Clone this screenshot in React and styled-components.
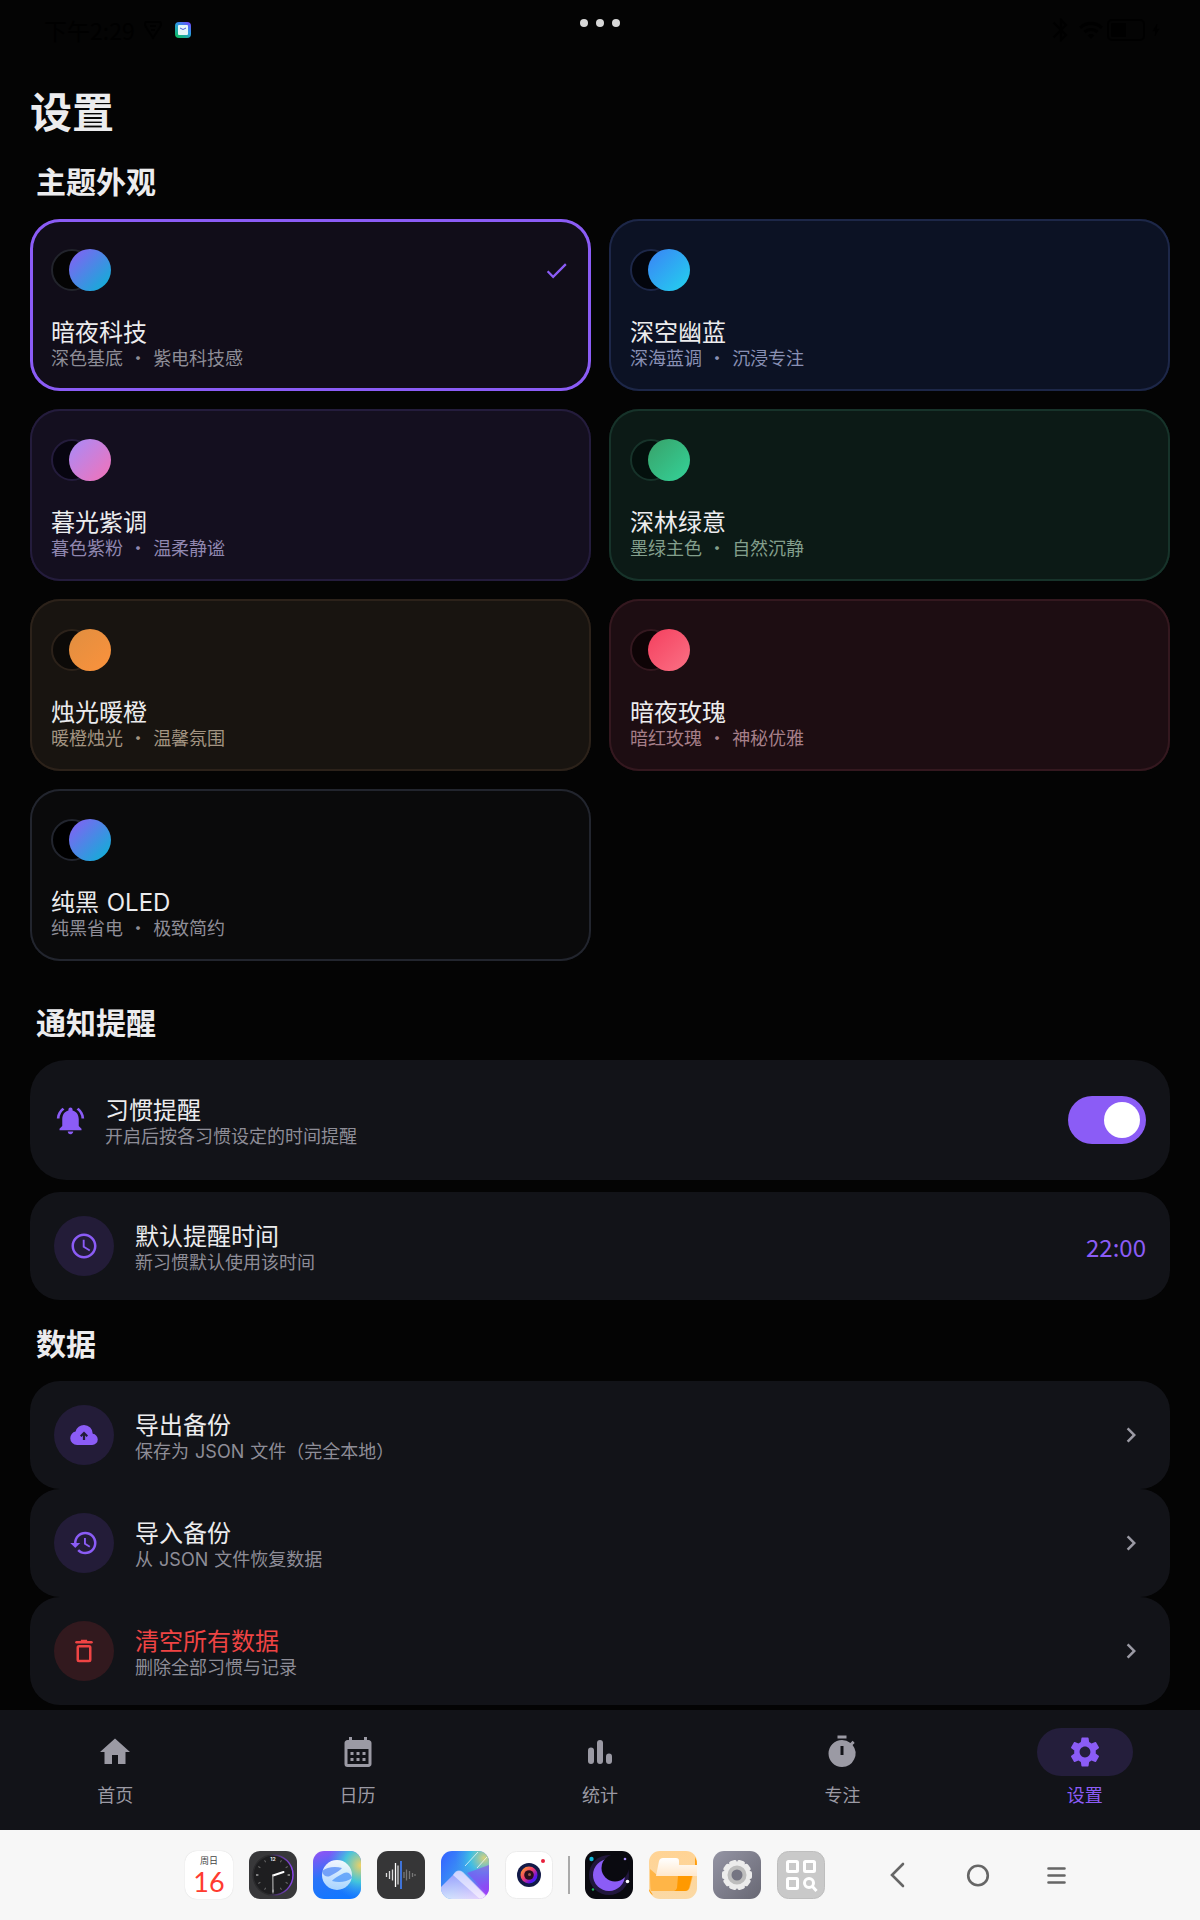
import { useState } from "react";
import styled, { createGlobalStyle } from "styled-components";
import {
  MdBluetooth,
  MdBolt,
  MdCalendarMonth,
  MdCheck,
  MdChevronRight,
  MdHistory,
  MdHome,
  MdNotificationsActive,
  MdSchedule,
  MdSettings,
  MdTimer,
  MdWifi,
} from "react-icons/md";

const themes = [
  { id: "dark", name: "暗夜科技", hint: ["深色基底", "紫电科技感"], bg: "#110d19", line: "#22242c", base: "#040404", from: "#8b5cf6", to: "#06b6d4", text: "#8e8d97" },
  { id: "blue", name: "深空幽蓝", hint: ["深海蓝调", "沉浸专注"], bg: "#0c1224", line: "#1d2748", base: "#03050d", from: "#3b82f6", to: "#22d3ee", text: "#8990b4" },
  { id: "dusk", name: "暮光紫调", hint: ["暮色紫粉", "温柔静谧"], bg: "#140f1f", line: "#241c3c", base: "#070510", from: "#a78bfa", to: "#f472b6", text: "#9087b0" },
  { id: "forest", name: "深林绿意", hint: ["墨绿主色", "自然沉静"], bg: "#0c1a16", line: "#17332a", base: "#04100d", from: "#38a169", to: "#34d399", text: "#839f8c" },
  { id: "candle", name: "烛光暖橙", hint: ["暖橙烛光", "温馨氛围"], bg: "#181410", line: "#2c221a", base: "#0c0a08", from: "#e08e40", to: "#fb923c", text: "#a39482" },
  { id: "rose", name: "暗夜玫瑰", hint: ["暗红玫瑰", "神秘优雅"], bg: "#1d0d12", line: "#34181f", base: "#0e0406", from: "#f43f5e", to: "#fb7185", text: "#a67f89" },
  { id: "oled", name: <>纯黑 <Latin>OLED</Latin></>, hint: ["纯黑省电", "极致简约"], bg: "#0a0a0b", line: "#22252e", base: "#000000", from: "#8b5cf6", to: "#06b6d4", text: "#8e8d97" },
];

function Latin({ children }) {
  return <LatinText>{children}</LatinText>;
}

const CloudUp = () => (
  <svg viewBox="0 0 24 24" width="30" height="30" aria-hidden="true">
    <path
      fill="#8b5cf6"
      d="M6.5 20q-2.28 0-3.89-1.57Q1 16.85 1 14.58q0-1.95 1.17-3.48 1.18-1.53 3.08-1.95.63-2.3 2.5-3.72Q9.63 4 12 4q2.93 0 4.96 2.04Q19 8.07 19 11q1.73.2 2.86 1.5 1.14 1.28 1.14 3 0 1.88-1.31 3.19T18.5 20z"
    />
    <path fill="#231c38" d="M12 9.2l3.2 3.2-1.1 1.1-1.2-1.2V16h-1.8v-3.7l-1.2 1.2-1.1-1.1z" />
  </svg>
);

const Trash = () => (
  <svg viewBox="0 0 24 24" width="30" height="30" fill="none" stroke="currentColor" strokeWidth="2" aria-hidden="true">
    <rect x="7" y="8.2" width="10" height="11.8" rx="1" />
    <path d="M6 5h12" strokeLinecap="round" />
    <path d="M9.5 4h5" />
  </svg>
);

const Bars = () => (
  <svg viewBox="0 0 24 24" width="36" height="36" fill="currentColor" aria-hidden="true">
    <rect x="4" y="9" width="4" height="11" rx="2" />
    <rect x="10" y="4" width="4" height="16" rx="2" />
    <rect x="16" y="13" width="4" height="7" rx="2" />
  </svg>
);

const tabs = [
  { name: "首页", icon: <MdHome size={36} /> },
  { name: "日历", icon: <MdCalendarMonth size={36} /> },
  { name: "统计", icon: <Bars /> },
  { name: "专注", icon: <MdTimer size={36} /> },
  { name: "设置", icon: <MdSettings size={36} /> },
];

const ClockApp = () => (
  <svg viewBox="0 0 48 48" width="48" height="48">
    <defs>
      <linearGradient id="ring" x1="0" x2="1">
        <stop offset="0.4" stopColor="#2b2b2d" />
        <stop offset="1" stopColor="#8b45f0" />
      </linearGradient>
    </defs>
    <rect width="48" height="48" rx="11" fill="#38383a" />
    <circle cx="24" cy="24" r="20" fill="#1e1e20" stroke="url(#ring)" strokeWidth="1.4" />
    {[30, 60, 90, 120, 150, 180, 210, 240, 270, 300, 330].map((a) => (
      <rect key={a} x="23.5" y="7" width="1" height="2.4" fill={a % 90 ? "#666" : "#ddd"} transform={`rotate(${a} 24 24)`} />
    ))}
    <text x="24" y="10" fontSize="5" fontWeight="700" textAnchor="middle" fill="#eee" fontFamily="Inter, sans-serif">12</text>
    <path d="M24 24.5L34.5 21" stroke="#fff" strokeWidth="2" strokeLinecap="round" />
    <path d="M23.8 24L24 42" stroke="#aaa" strokeWidth="1.2" strokeLinecap="round" />
  </svg>
);

const BrowserApp = () => (
  <svg viewBox="0 0 48 48" width="48" height="48">
    <defs>
      <linearGradient id="brBase" x1="0.2" y1="0" x2="0.5" y2="1">
        <stop offset="0" stopColor="#8c55f5" />
        <stop offset="0.5" stopColor="#2a74f8" />
        <stop offset="1" stopColor="#1277ff" />
      </linearGradient>
      <radialGradient id="brGlow" cx="1" cy="0.3" r="0.7">
        <stop offset="0" stopColor="#f4d060" />
        <stop offset="0.5" stopColor="#45cfd8" stopOpacity="0.9" />
        <stop offset="1" stopColor="#45a0f8" stopOpacity="0" />
      </radialGradient>
      <linearGradient id="brBall" x1="0" y1="0" x2="0" y2="1">
        <stop offset="0" stopColor="#ffffff" />
        <stop offset="1" stopColor="#b4dcff" />
      </linearGradient>
    </defs>
    <rect width="48" height="48" rx="11" fill="url(#brBase)" />
    <rect width="48" height="48" rx="11" fill="url(#brGlow)" />
    <circle cx="24" cy="24" r="15" fill="url(#brBall)" opacity="0.92" />
    <path d="M9 20c5-4 13-5 20-3-2 3-7 5-12 8-3 1.5-7 0-8-5z" fill="#5a90f8" opacity="0.8" />
    <path d="M39 27c-5 4-13 5-20 3 2-3 7-5 12-8 3-1.5 7 0 8 5z" fill="#4a94fa" opacity="0.75" />
  </svg>
);

const RecorderApp = () => (
  <svg viewBox="0 0 48 48" width="48" height="48">
    <rect width="48" height="48" rx="11" fill="#363637" />
    <path d="M9.5 22v4M12.5 20v8M15.5 18.5v11" stroke="#ddd" strokeWidth="1.3" />
    <path d="M18.5 12v24" stroke="#fff" strokeWidth="1.3" />
    <path d="M21 14.5v19" stroke="#aaa" strokeWidth="1.8" />
    <path d="M24 10v28" stroke="#3f73d8" strokeWidth="2" />
    <path d="M27 21v6M29.5 18.5v11M32.5 20v8M35.5 22v4M38 23v2" stroke="#777" strokeWidth="1.3" />
  </svg>
);

const GalleryApp = () => (
  <svg viewBox="0 0 48 48" width="48" height="48">
    <defs>
      <linearGradient id="gaBase" x1="0" y1="0.2" x2="1" y2="0.8">
        <stop offset="0" stopColor="#3569ff" />
        <stop offset="0.45" stopColor="#3b9cf0" />
        <stop offset="1" stopColor="#a040f8" />
      </linearGradient>
      <radialGradient id="gaGlow" cx="0.9" cy="0.15" r="0.6">
        <stop offset="0" stopColor="#d8d27c" />
        <stop offset="0.5" stopColor="#3fc7e0" stopOpacity="0.8" />
        <stop offset="1" stopColor="#3b9cf0" stopOpacity="0" />
      </radialGradient>
      <linearGradient id="gaHill" x1="0" y1="0" x2="0" y2="1">
        <stop offset="0" stopColor="#a99cff" />
        <stop offset="1" stopColor="#f7f4ff" />
      </linearGradient>
      <clipPath id="gaClip">
        <rect width="48" height="48" rx="11" />
      </clipPath>
    </defs>
    <g clipPath="url(#gaClip)">
      <rect width="48" height="48" fill="url(#gaBase)" />
      <rect width="48" height="48" fill="url(#gaGlow)" />
      <path d="M26 22l22-8v30z" fill="#8a48f4" opacity="0.6" />
      <path d="M0 36L14 22q4-4 8 0l26 26H0z" fill="url(#gaHill)" opacity="0.8" />
      <path d="M12 24q4-7 10-3l23 23-5 5z" fill="#fff" opacity="0.55" />
      <path d="M24 15L37 1M36 17l10-11" stroke="#fff" strokeWidth="1" opacity="0.7" />
    </g>
  </svg>
);

const CameraApp = () => (
  <svg viewBox="0 0 48 48" width="48" height="48">
    <defs>
      <linearGradient id="lens" x1="0" y1="0" x2="1" y2="1">
        <stop offset="0" stopColor="#ffb020" />
        <stop offset="0.45" stopColor="#f03a70" />
        <stop offset="0.75" stopColor="#5a10f0" />
        <stop offset="1" stopColor="#1060ff" />
      </linearGradient>
    </defs>
    <rect x="0.5" y="0.5" width="47" height="47" rx="11" fill="#fff" stroke="#ececec" />
    <circle cx="24" cy="24" r="12" fill="#121a48" />
    <circle cx="24" cy="24" r="8.5" fill="url(#lens)" />
    <circle cx="24" cy="24" r="4.8" fill="#2a0f1c" />
    <circle cx="24.5" cy="23.5" r="1.5" fill="#9b5a4c" />
    <circle cx="38" cy="10" r="2" fill="#e8203c" />
  </svg>
);

const HabitApp = () => (
  <svg viewBox="0 0 48 48" width="48" height="48">
    <rect width="48" height="48" rx="11" fill="#0a0a10" />
    <circle cx="24" cy="24" r="20" fill="#21173c" />
    <circle cx="24" cy="24" r="16" fill="#8b5cf6" />
    <circle cx="30" cy="17" r="13.5" fill="#0a0a10" />
    <circle cx="6.5" cy="8" r="2.2" fill="#10b5d6" />
    <circle cx="40" cy="8" r="1.3" fill="#a78bfa" />
    <circle cx="42.5" cy="30.5" r="1.8" fill="#fff" />
    <circle cx="8" cy="38.5" r="1.2" fill="#20b860" />
  </svg>
);

const FilesApp = () => (
  <svg viewBox="0 0 48 48" width="48" height="48">
    <defs>
      <linearGradient id="fiBase" x1="0" y1="0" x2="0" y2="1">
        <stop offset="0" stopColor="#ffd394" />
        <stop offset="1" stopColor="#fbd9a5" />
      </linearGradient>
      <linearGradient id="fiFront" x1="0" y1="0" x2="0" y2="1">
        <stop offset="0" stopColor="#ffffff" />
        <stop offset="1" stopColor="#ffe8cc" />
      </linearGradient>
    </defs>
    <rect width="48" height="48" rx="11" fill="url(#fiBase)" />
    <path d="M46 6q2 3 2 8h-2zM0 38l4 6q-4-2-4-6z" fill="#ff9d0c" />
    <path d="M1 18q0 22 1 22h34q4 0 5-4l3-12H8z" fill="#ffb547" />
    <path d="M29 25h14l-3 12q-1 3-4 3H25q2 0 3-3z" fill="#ff9900" />
    <path d="M10 10q1-3 4-3h13q3 0 3 3v4h18v11H7z" fill="url(#fiFront)" />
  </svg>
);

const SystemApp = () => (
  <svg viewBox="0 0 48 48" width="48" height="48">
    <defs>
      <linearGradient id="syBase" x1="0" y1="0" x2="1" y2="1">
        <stop offset="0" stopColor="#9494a4" />
        <stop offset="1" stopColor="#686874" />
      </linearGradient>
    </defs>
    <rect width="48" height="48" rx="11" fill="url(#syBase)" />
    {[0, 36, 72, 108, 144, 180, 216, 252, 288, 324].map((a) => (
      <rect key={a} x="20" y="9" width="8" height="8" rx="2" fill="#ececec" transform={`rotate(${a + 18} 24 24)`} />
    ))}
    <circle cx="24" cy="24" r="13" fill="#ececec" />
    <circle cx="24" cy="24" r="7.5" fill="#747482" stroke="#bdbdbd" strokeWidth="4" />
  </svg>
);

const SearchApp = () => (
  <svg viewBox="0 0 48 48" width="48" height="48">
    <rect x="0.5" y="0.5" width="47" height="47" rx="11" fill="#c9c9c9" stroke="#bebebe" />
    <g fill="none" stroke="#fff" strokeWidth="3">
      <rect x="10.5" y="10.5" width="10" height="10" rx="1" />
      <rect x="27.5" y="10.5" width="10" height="10" rx="1" />
      <rect x="10.5" y="27.5" width="10" height="10" rx="1" />
      <circle cx="32" cy="32" r="4.5" />
      <path d="M35 35l4.5 5" />
    </g>
  </svg>
);

const mainApps = [
  { name: "时钟", icon: <ClockApp /> },
  { name: "浏览器", icon: <BrowserApp /> },
  { name: "录音机", icon: <RecorderApp /> },
  { name: "相册", icon: <GalleryApp /> },
  { name: "相机", icon: <CameraApp /> },
];

const recentApps = [
  { name: "习惯", icon: <HabitApp /> },
  { name: "文件", icon: <FilesApp /> },
  { name: "系统设置", icon: <SystemApp /> },
  { name: "搜索应用", icon: <SearchApp /> },
];

const App = () => {
  const [theme, setTheme] = useState("dark");
  const [remind, setRemind] = useState(true);
  const [tab, setTab] = useState("设置");

  return (
    <Page>
      <GlobalStyle />
      <StatusBar>
        <StatusLeft>
          <span>下午2:29</span>
          <svg viewBox="0 0 20 20" width="20" height="20" fill="none" stroke="currentColor" strokeWidth="2">
            <path d="M3 2h14q2 2 0 5l-7 11L3 7Q1 4 3 2zM7 6h6M8 10h4" />
          </svg>
          <MailBadge viewBox="0 0 16 16" width="16" height="16">
            <defs>
              <linearGradient id="mail" x1="1" y1="0" x2="0.3" y2="1">
                <stop offset="0" stopColor="#7a3cff" />
                <stop offset="0.5" stopColor="#2b9ae0" />
                <stop offset="1" stopColor="#10b86c" />
              </linearGradient>
            </defs>
            <rect width="16" height="16" rx="4" fill="url(#mail)" />
            <rect x="3" y="3" width="10" height="10" rx="1" fill="#e4f6f8" />
            <path d="M5 6q3 3 6 0" stroke="#4a5ad8" fill="none" />
          </MailBadge>
        </StatusLeft>
        <Dots>
          <i />
          <i />
          <i />
        </Dots>
        <StatusRight>
          <MdBluetooth size={28} />
          <MdWifi size={26} />
          <Battery />
          <MdBolt size={16} />
        </StatusRight>
      </StatusBar>

      <Main>
        <h1>设置</h1>

        <h2>主题外观</h2>
        <ThemeGrid>
          {themes.map((t) => (
            <ThemeCard key={t.id} type="button" $theme={t} $active={t.id === theme} aria-pressed={t.id === theme} onClick={() => setTheme(t.id)}>
              <CardTop>
                <Swatch $theme={t}>
                  <i />
                  <i />
                </Swatch>
                {t.id === theme && <MdCheck size={27} color="#8b5cf6" />}
              </CardTop>
              <Title>{t.name}</Title>
              <Hint $color={t.text}>
                {t.hint[0]} <MidDot>·</MidDot> {t.hint[1]}
              </Hint>
            </ThemeCard>
          ))}
        </ThemeGrid>

        <Section>
          <h2>通知提醒</h2>
          <SwitchRow>
            <MdNotificationsActive size={33} color="#8b5cf6" />
            <RowText as="label" htmlFor="remind">
              <Title>习惯提醒</Title>
              <Hint>开启后按各习惯设定的时间提醒</Hint>
            </RowText>
            <Switch id="remind" type="checkbox" role="switch" checked={remind} onChange={() => setRemind(!remind)} />
          </SwitchRow>
          <Row type="button">
            <Bubble>
              <MdSchedule size={30} />
            </Bubble>
            <RowText>
              <Title>默认提醒时间</Title>
              <Hint>新习惯默认使用该时间</Hint>
            </RowText>
            <Time>22:00</Time>
          </Row>
        </Section>

        <DataSection>
          <h2>数据</h2>
          <Row type="button">
            <Bubble>
              <CloudUp />
            </Bubble>
            <RowText>
              <Title>导出备份</Title>
              <Hint>
                保存为 <Latin>JSON</Latin> 文件（完全本地）
              </Hint>
            </RowText>
            <MdChevronRight size={30} />
          </Row>
          <Row type="button">
            <Bubble>
              <MdHistory size={30} />
            </Bubble>
            <RowText>
              <Title>导入备份</Title>
              <Hint>
                从 <Latin>JSON</Latin> 文件恢复数据
              </Hint>
            </RowText>
            <MdChevronRight size={30} />
          </Row>
          <Row type="button">
            <Bubble $danger>
              <Trash />
            </Bubble>
            <RowText>
              <Title $danger>清空所有数据</Title>
              <Hint>删除全部习惯与记录</Hint>
            </RowText>
            <MdChevronRight size={30} />
          </Row>
        </DataSection>
      </Main>

      <TabBar>
        {tabs.map((t) => (
          <Tab key={t.name} type="button" $active={t.name === tab} onClick={() => setTab(t.name)}>
            <Pill $active={t.name === tab}>{t.icon}</Pill>
            <span>{t.name}</span>
          </Tab>
        ))}
      </TabBar>

      <Dock>
        <DockApps>
          <DockApp type="button">
            <DateIcon>
              <small>周日</small>
              <b>16</b>
            </DateIcon>
          </DockApp>
          {mainApps.map((a) => (
            <DockApp key={a.name} type="button" aria-label={a.name}>
              {a.icon}
            </DockApp>
          ))}
        </DockApps>
        <Divider />
        <DockApps>
          {recentApps.map((a) => (
            <DockApp key={a.name} type="button" aria-label={a.name}>
              {a.icon}
            </DockApp>
          ))}
        </DockApps>
        <SystemKeys>
          <SystemKey type="button" aria-label="返回">
            <svg viewBox="0 0 28 28" width="28" height="28">
              <path d="M19 3L8 14l11 11" />
            </svg>
          </SystemKey>
          <SystemKey type="button" aria-label="主页">
            <svg viewBox="0 0 28 28" width="28" height="28">
              <circle cx="14" cy="14.5" r="9.8" />
            </svg>
          </SystemKey>
          <SystemKey type="button" aria-label="最近任务">
            <svg viewBox="0 0 28 28" width="28" height="28">
              <path d="M4.5 7.5h16M4.5 14.5h16M4.5 21.5h16" />
            </svg>
          </SystemKey>
        </SystemKeys>
      </Dock>
    </Page>
  );
};

export default App;

const GlobalStyle = createGlobalStyle`
  * {
    box-sizing: border-box;
  }
  body {
    margin: 0;
    background-color: #040404;
    font-family: "Noto Sans CJK SC", sans-serif;
  }
  button {
    border: 0;
    padding: 0;
    background: none;
    color: inherit;
    font: inherit;
    text-align: left;
    cursor: pointer;
  }
  svg {
    display: block;
    flex-shrink: 0;
  }
`;

const Page = styled.div`
  min-height: 100vh;
  display: flex;
  flex-direction: column;
  color: #ececee;
`;

const StatusBar = styled.header`
  position: relative;
  display: flex;
  justify-content: space-between;
  align-items: center;
  height: 60px;
  padding: 0 36px 0 44px;
  color: #000;
  font-size: 23px;
  line-height: 30px;
`;

const StatusLeft = styled.div`
  display: flex;
  align-items: center;
  gap: 8px;
`;

const StatusRight = styled.div`
  display: flex;
  align-items: center;
  gap: 3px;
`;

const MailBadge = styled.svg`
  margin-left: 4px;
`;

const Battery = styled.i`
  width: 38px;
  height: 22px;
  border: 2px solid #000;
  border-radius: 5px;
  background: linear-gradient(90deg, #000 50%, transparent 50%) content-box;
  padding: 2px;
`;

const Dots = styled.div`
  position: absolute;
  top: 19px;
  left: 50%;
  transform: translateX(-50%);
  display: flex;
  gap: 8px;
  i {
    width: 8px;
    height: 8px;
    border-radius: 50%;
    background-color: #d8d8d8;
  }
`;

const Main = styled.main`
  flex: 1;
  padding: 26px 30px 5px;
  h1 {
    margin: 0 0 28px;
    font-size: 42px;
    line-height: 48px;
  }
  h2 {
    margin: 0 0 21px;
    padding-left: 6px;
    font-size: 30px;
    line-height: 36px;
  }
`;

const ThemeGrid = styled.div`
  display: grid;
  grid-template-columns: 1fr 1fr;
  gap: 18px;
  margin-bottom: 42px;
`;

const ThemeCard = styled.button`
  display: flex;
  flex-direction: column;
  padding: 30px 21px 20px;
  border-radius: 30px;
  background-color: ${(p) => p.$theme.bg};
  box-shadow: inset 0 0 0 ${(p) => (p.$active ? "3px #8b5cf6" : `2px ${p.$theme.line}`)};
`;

const CardTop = styled.span`
  display: flex;
  justify-content: space-between;
  align-items: center;
  width: 100%;
  margin-bottom: 28px;
`;

const Swatch = styled.span`
  display: flex;
  i {
    width: 42px;
    height: 42px;
    border-radius: 50%;
    background-color: ${(p) => p.$theme.base};
    border: 2px solid ${(p) => p.$theme.line};
  }
  i + i {
    margin-left: -24px;
    border: 0;
    background: linear-gradient(135deg, ${(p) => p.$theme.from}, ${(p) => p.$theme.to});
  }
`;

const Title = styled.span`
  display: block;
  font-family: Inter, "Noto Sans CJK SC", sans-serif;
  font-size: 24px;
  line-height: 28px;
  color: ${(p) => (p.$danger ? "#ef4444" : "#ececee")};
`;

const Hint = styled.span`
  display: block;
  font-family: Inter, "Noto Sans CJK SC", sans-serif;
  font-size: 18px;
  line-height: 24px;
  color: ${(p) => p.$color || "#8e8d97"};
`;

const LatinText = styled.span`
  margin: 0 1px;
`;

const MidDot = styled.span`
  margin: 0 1px;
  font-family: "Noto Sans CJK SC", sans-serif;
  line-height: 1;
`;

const Section = styled.section`
  display: flex;
  flex-direction: column;
  margin-bottom: 24px;
`;

const DataSection = styled.section`
  display: flex;
  flex-direction: column;
`;

const Row = styled.button`
  display: flex;
  align-items: center;
  gap: 21px;
  padding: 24px;
  border-radius: 30px;
  background-color: #121318;
  color: #9b9aa4;
`;

const SwitchRow = styled.div`
  display: flex;
  align-items: center;
  gap: 18px;
  min-height: 120px;
  margin-bottom: 12px;
  padding: 24px;
  border-radius: 36px;
  background-color: #121318;
`;

const RowText = styled.span`
  flex: 1;
  padding-top: 6px;
`;

const Bubble = styled.span`
  display: flex;
  justify-content: center;
  align-items: center;
  width: 60px;
  height: 60px;
  border-radius: 50%;
  background-color: ${(p) => (p.$danger ? "#32191e" : "#231c38")};
  color: ${(p) => (p.$danger ? "#ef4444" : "#8b5cf6")};
`;

const Time = styled.span`
  padding-top: 2px;
  font-size: 24px;
  line-height: 28px;
  color: #8b5cf6;
`;

const Switch = styled.input`
  appearance: none;
  width: 78px;
  height: 48px;
  margin: 0;
  padding: 6px;
  border-radius: 24px;
  background-color: ${(p) => (p.checked ? "#8b5cf6" : "#33343c")};
  cursor: pointer;
  &::before {
    content: "";
    display: block;
    width: 36px;
    height: 36px;
    margin-left: ${(p) => (p.checked ? "30px" : "0")};
    border-radius: 50%;
    background-color: #fff;
  }
`;

const TabBar = styled.nav`
  display: flex;
  gap: 12px;
  height: 120px;
  padding-top: 18px;
  background-color: #121318;
`;

const Tab = styled.button`
  flex: 1;
  display: flex;
  flex-direction: column;
  align-items: center;
  gap: 6px;
  font-size: 18px;
  line-height: 24px;
  color: ${(p) => (p.$active ? "#8b5cf6" : "#9b9aa4")};
`;

const Pill = styled.span`
  display: flex;
  justify-content: center;
  align-items: center;
  width: 96px;
  height: 48px;
  border-radius: 24px;
  background-color: ${(p) => (p.$active ? "#241e3b" : "transparent")};
`;

const Dock = styled.footer`
  display: flex;
  align-items: center;
  gap: 15px;
  height: 90px;
  padding: 0 122px 0 185px;
  background-color: #f7f7f7;
`;

const DockApps = styled.div`
  display: flex;
  gap: 16px;
`;

const DockApp = styled.button`
  width: 48px;
  height: 48px;
`;

const DateIcon = styled.span`
  display: flex;
  flex-direction: column;
  align-items: center;
  height: 48px;
  padding-top: 4px;
  border-radius: 12px;
  background-color: #fff;
  box-shadow: 0 0 1px #ccc;
  small {
    font-family: Inter, "Noto Sans CJK SC", sans-serif;
    font-size: 9px;
    line-height: 12px;
    color: #444;
  }
  b {
    font-family: Lato, sans-serif;
    font-size: 27px;
    font-weight: 400;
    line-height: 30px;
    color: #ff3b30;
  }
`;

const Divider = styled.i`
  width: 2px;
  height: 38px;
  background-color: #aaa;
`;

const SystemKeys = styled.div`
  display: flex;
  gap: 40px;
  margin-left: auto;
`;

const SystemKey = styled.button`
  display: flex;
  justify-content: center;
  align-items: center;
  width: 40px;
  height: 48px;
  svg {
    fill: none;
    stroke: #666;
    stroke-width: 2.6;
    stroke-linecap: round;
  }
`;
